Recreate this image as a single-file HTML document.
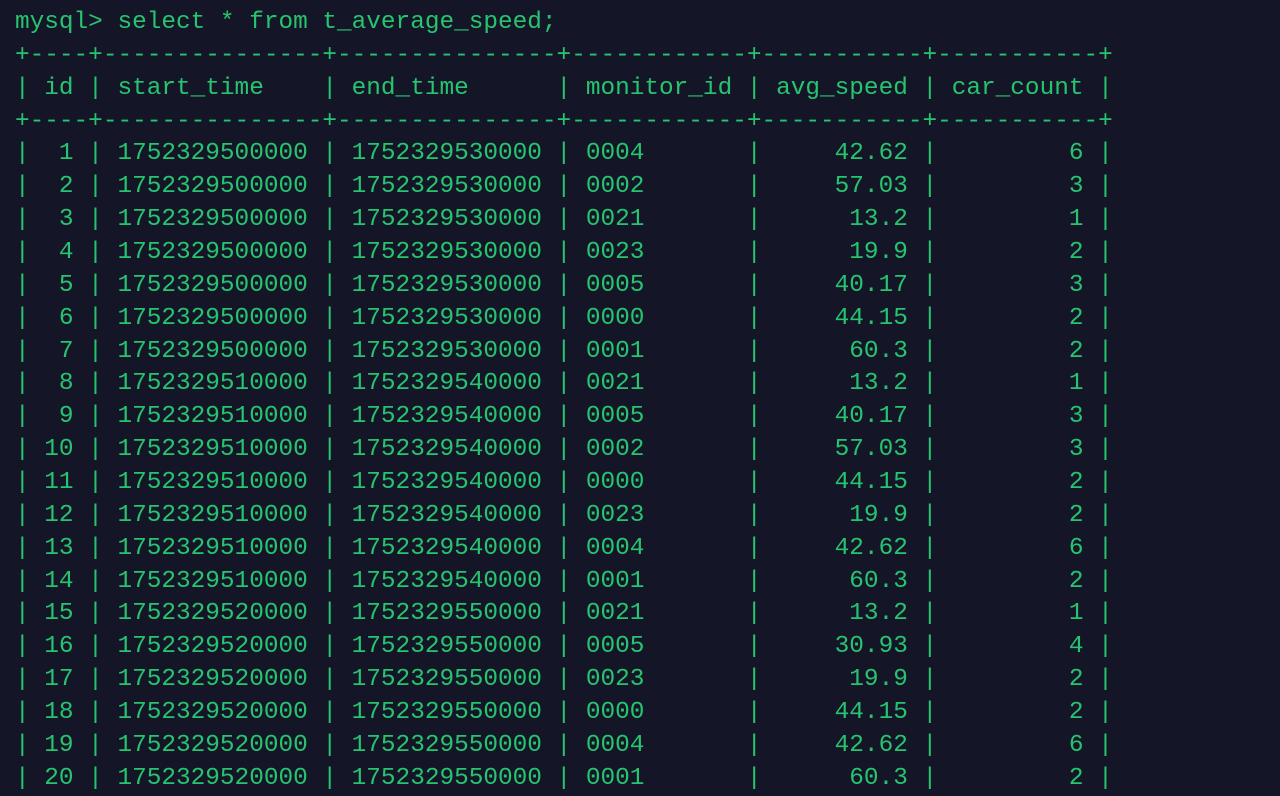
<!DOCTYPE html>
<html><head><meta charset="utf-8"><style>
html,body{margin:0;padding:0;background:#141628;width:1280px;height:776px;overflow:hidden}
pre{margin:0;position:absolute;left:15px;top:7px;font-family:"Liberation Mono",monospace;font-size:24.4px;line-height:32.86px;color:#27c46f;white-space:pre}
</style></head><body><pre>mysql&gt; select * from t_average_speed;
+----+---------------+---------------+------------+-----------+-----------+
| id | start_time    | end_time      | monitor_id | avg_speed | car_count |
+----+---------------+---------------+------------+-----------+-----------+
|  1 | 1752329500000 | 1752329530000 | 0004       |     42.62 |         6 |
|  2 | 1752329500000 | 1752329530000 | 0002       |     57.03 |         3 |
|  3 | 1752329500000 | 1752329530000 | 0021       |      13.2 |         1 |
|  4 | 1752329500000 | 1752329530000 | 0023       |      19.9 |         2 |
|  5 | 1752329500000 | 1752329530000 | 0005       |     40.17 |         3 |
|  6 | 1752329500000 | 1752329530000 | 0000       |     44.15 |         2 |
|  7 | 1752329500000 | 1752329530000 | 0001       |      60.3 |         2 |
|  8 | 1752329510000 | 1752329540000 | 0021       |      13.2 |         1 |
|  9 | 1752329510000 | 1752329540000 | 0005       |     40.17 |         3 |
| 10 | 1752329510000 | 1752329540000 | 0002       |     57.03 |         3 |
| 11 | 1752329510000 | 1752329540000 | 0000       |     44.15 |         2 |
| 12 | 1752329510000 | 1752329540000 | 0023       |      19.9 |         2 |
| 13 | 1752329510000 | 1752329540000 | 0004       |     42.62 |         6 |
| 14 | 1752329510000 | 1752329540000 | 0001       |      60.3 |         2 |
| 15 | 1752329520000 | 1752329550000 | 0021       |      13.2 |         1 |
| 16 | 1752329520000 | 1752329550000 | 0005       |     30.93 |         4 |
| 17 | 1752329520000 | 1752329550000 | 0023       |      19.9 |         2 |
| 18 | 1752329520000 | 1752329550000 | 0000       |     44.15 |         2 |
| 19 | 1752329520000 | 1752329550000 | 0004       |     42.62 |         6 |
| 20 | 1752329520000 | 1752329550000 | 0001       |      60.3 |         2 |
</pre></body></html>
